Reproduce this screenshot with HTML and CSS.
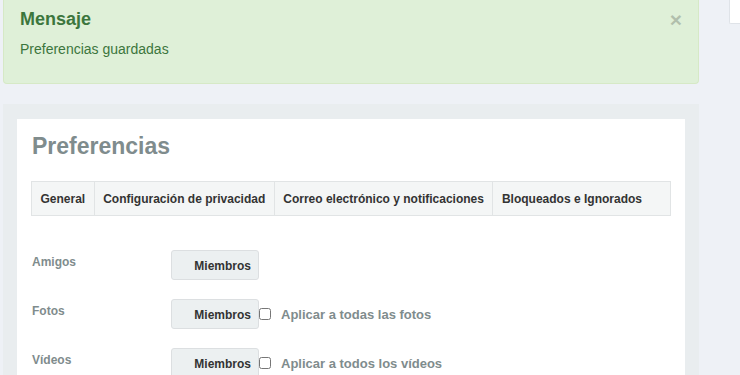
FILE: index.html
```html
<!DOCTYPE html>
<html lang="es">
  <head>
    <meta charset="UTF-8" />
    <meta name="viewport" content="width=device-width, initial-scale=1.0" />
    <title>Preferencias</title>
    <link rel="stylesheet" href="styles.css">
  </head>
  <body>
    <div class="layout">
      <div class="main">
        <div class="alert">
          <button class="alert-close" type="button">&times;</button>
          <h4>Mensaje</h4>
          <p>Preferencias guardadas</p>
        </div>

        <div class="panel">
          <div class="card">
            <h2>Preferencias</h2>

            <ul class="tabs">
              <li>General</li>
              <li>Configuración de privacidad</li>
              <li>Correo electrónico y notificaciones</li>
              <li>Bloqueados e Ignorados</li>
            </ul>

            <div class="pref-list">
              <div class="pref-row">
                <label class="pref-label">Amigos</label>
                <div class="pref-select">Miembros</div>
              </div>
              <div class="pref-row">
                <label class="pref-label">Fotos</label>
                <div class="pref-select">Miembros</div>
                <label class="pref-check"><input type="checkbox" /> Aplicar a todas las fotos</label>
              </div>
              <div class="pref-row">
                <label class="pref-label">Vídeos</label>
                <div class="pref-select">Miembros</div>
                <label class="pref-check"><input type="checkbox" /> Aplicar a todos los vídeos</label>
              </div>
            </div>
          </div>
        </div>
      </div>

      <div class="sidebar">
        <div class="side-box"></div>
      </div>
    </div>
  </body>
</html>
```

FILE: styles.css
```css
body {
  margin: 0;
  padding: 0 0 0 3px;
  background-color: #eef1f6;
  font-family: 'Liberation Sans', Arial, sans-serif;
  color: #333;
  overflow: hidden;
}

.layout {
  display: flex;
  align-items: flex-start;
  gap: 30px;
}

.main {
  width: 696px;
  flex-shrink: 0;
}

.sidebar {
  flex: 1;
}
.side-box {
  height: 23px;
  background-color: #ffffff;
  border-left: 1px solid #dfe3e8;
  border-bottom: 1px solid #dfe3e8;
  border-radius: 0 0 0 2px;
}

/* message box */
.alert {
  position: relative;
  background-color: #dff0d8;
  border: 1px solid #d6e9c6;
  border-top: none;
  border-radius: 0 0 4px 4px;
  color: #3c763d;
  padding: 8px 16px 0 16px;
  height: 75px;
}
.alert h4 {
  margin: 0;
  font-size: 18px;
  font-weight: bold;
  line-height: 22px;
}
.alert p {
  margin: 10px 0 0 0;
  font-size: 14px;
  line-height: 18px;
}
.alert-close {
  position: absolute;
  top: 9px;
  right: 16px;
  background: none;
  border: none;
  padding: 0;
  font-family: 'Liberation Sans', Arial, sans-serif;
  font-size: 21px;
  font-weight: bold;
  line-height: 21px;
  color: #000;
  opacity: 0.2;
}

/* preferences panel */
.panel {
  margin-top: 20px;
  background-color: #e9edef;
  padding: 15px 14px 0 14px;
}
.card {
  background-color: #ffffff;
  padding: 12px 14px 30px 14px;
}
.card h2 {
  margin: 0 0 0 1px;
  font-size: 23px;
  font-weight: bold;
  line-height: 30px;
  color: #7f8c8d;
}

.tabs {
  display: flex;
  list-style: none;
  margin: 20px 0 0 0;
  padding: 0;
  border: 1px solid #e1e4e5;
  background-color: #f4f6f6;
}
.tabs li {
  padding: 0 8.5px;
  height: 33px;
  line-height: 35px;
  font-size: 12px;
  font-weight: bold;
  color: #333;
  border-left: 1px solid #e1e4e5;
}
.tabs li:first-child {
  border-left: none;
}

.pref-list {
  margin-top: 34px;
  display: flex;
  flex-direction: column;
  gap: 19px;
}
.pref-row {
  display: flex;
  align-items: center;
  height: 30px;
}
.pref-label {
  width: 139px;
  padding-left: 1px;
  margin-top: -6px;
  font-size: 12px;
  font-weight: bold;
  color: #7f8c8d;
}
.pref-select {
  box-sizing: border-box;
  width: 88px;
  height: 30px;
  line-height: 30px;
  padding-right: 7px;
  text-align: right;
  background-color: #ecf0f1;
  border: 1px solid #dcdfe1;
  border-radius: 3px;
  font-size: 12px;
  font-weight: bold;
  color: #333;
}
.pref-check {
  display: flex;
  align-items: center;
  font-size: 13px;
  font-weight: bold;
  color: #7f8c8d;
}
.pref-check input {
  margin: 0 10px 0 0;
  width: 12px;
  height: 12px;
}
```
